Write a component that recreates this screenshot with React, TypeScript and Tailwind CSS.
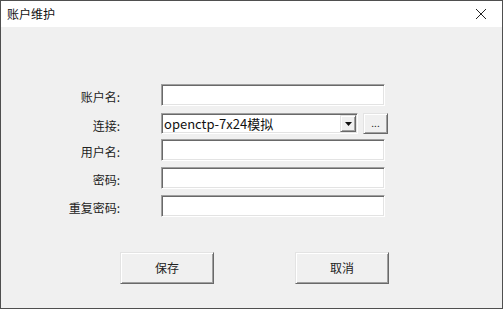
import React from 'react';

const font = { fontFamily: '"Noto Sans CJK SC", "Noto Sans", sans-serif' };

function Sunken({ className = '', children }: { className?: string; children?: React.ReactNode }) {
  return (
    <div
      className={`bg-white border border-t-[#a0a0a0] border-l-[#a0a0a0] border-r-white border-b-white shadow-[inset_1px_1px_0_#696969,inset_-1px_-1px_0_#e3e3e3] ${className}`}
    >
      {children}
    </div>
  );
}

function Raised({ className = '', children }: { className?: string; children?: React.ReactNode }) {
  return (
    <div
      className={`flex items-center justify-center bg-[#f0f0f0] border border-t-[#e3e3e3] border-l-[#e3e3e3] border-r-[#696969] border-b-[#696969] shadow-[inset_1px_1px_0_#ffffff,inset_-1px_-1px_0_#a0a0a0] ${className}`}
    >
      {children}
    </div>
  );
}

function Row({ label, mt, children }: { label: string; mt: string; children: React.ReactNode }) {
  return (
    <div className={`flex items-center ${mt}`}>
      <div className="w-[119px] text-right text-[12px] text-[#222] leading-none pt-[4px]">{label}</div>
      <div className="ml-[41px] flex items-center">{children}</div>
    </div>
  );
}

export default function App() {
  return (
    <div
      className="w-[503px] h-[309px] flex flex-col border border-[#4f4f4f] bg-[#f0f0f0] overflow-hidden"
      style={font}
    >
      {/* title bar */}
      <div className="h-[26px] bg-white flex items-center justify-between shrink-0">
        <span className="pl-[6px] text-[12px] text-[#111]">账户维护</span>
        <svg width="12" height="12" viewBox="0 0 12 12" className="mr-[15px]">
          <path d="M1 1 L11 11 M11 1 L1 11" stroke="#222" strokeWidth="1" />
        </svg>
      </div>

      {/* body */}
      <div className="flex flex-col">
        <Row label="账户名:" mt="mt-[57px]">
          <Sunken className="w-[224px] h-[22px]" />
        </Row>
        <Row label="连接:" mt="mt-[7px]">
          <Sunken className="w-[197px] h-[21px] flex items-center justify-between">
            <span className="pl-[2px] text-[13px] text-[#111] leading-none">openctp-7x24模拟</span>
            <Raised className="w-[16px] h-[17px] mr-[1px]">
              <svg width="7" height="4" viewBox="0 0 7 4">
                <path d="M0 0 H7 L3.5 4 Z" fill="#111" />
              </svg>
            </Raised>
          </Sunken>
          <Raised className="ml-[5px] w-[25px] h-[21px] text-[10px] leading-none text-[#222]">
            <span className="-mt-[2px]">...</span>
          </Raised>
        </Row>
        <Row label="用户名:" mt="mt-[5px]">
          <Sunken className="w-[224px] h-[22px]" />
        </Row>
        <Row label="密码:" mt="mt-[6px]">
          <Sunken className="w-[224px] h-[22px]" />
        </Row>
        <Row label="重复密码:" mt="mt-[6px]">
          <Sunken className="w-[224px] h-[22px]" />
        </Row>

        <div className="flex mt-[35px] pl-[119px]">
          <Raised className="w-[94px] h-[32px] text-[12px] text-[#222]">保存</Raised>
          <Raised className="ml-[81px] w-[94px] h-[32px] text-[12px] text-[#222]">取消</Raised>
        </div>
      </div>
    </div>
  );
}
